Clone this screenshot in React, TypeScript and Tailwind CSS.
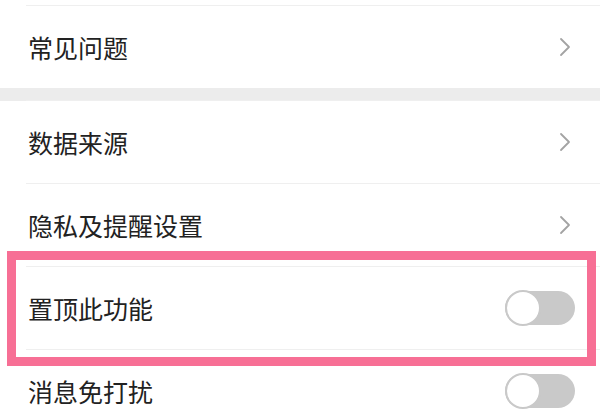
const Chevron = () => (
  <svg width="12" height="20" viewBox="0 0 12 20" className="mr-[4px]">
    <polyline points="2,2 10,10 2,18" fill="none" stroke="#a3a3a3" strokeWidth="1.8" strokeLinecap="round" strokeLinejoin="round" />
  </svg>
)

const Toggle = () => (
  <div className="w-[70px] h-[34px] rounded-full bg-[#c9c9c9] flex items-center">
    <div className="w-[36px] h-[36px] rounded-full bg-white border-2 border-[#c9c9c9]" />
  </div>
)

const Row = ({ label, right }: { label: string; right: 'chevron' | 'toggle' }) => (
  <div className="h-[83px] pl-[26px] flex flex-col">
    <div className="h-px bg-[#efefef]" />
    <div className="flex-1 flex items-center justify-between pl-[2px] pr-[25px]">
      <span className="text-[25px] text-[#222222] leading-none">{label}</span>
      {right === 'chevron' ? <Chevron /> : <Toggle />}
    </div>
  </div>
)

export default function App() {
  return (
    <div
      className="relative w-[600px] h-[409px] overflow-hidden bg-white pt-[5px]"
      style={{ fontFamily: '"Noto Sans CJK SC", "Noto Sans", sans-serif' }}
    >
      <Row label="常见问题" right="chevron" />
      <div className="h-[13px] bg-[#ececec]" />
      <div className="-mt-px">
        <Row label="数据来源" right="chevron" />
      </div>
      <Row label="隐私及提醒设置" right="chevron" />
      <Row label="置顶此功能" right="toggle" />
      <Row label="消息免打扰" right="toggle" />

      <div className="absolute left-[7px] top-[251px] w-[589px] h-[115px] border-[9px] border-[#f76f95] pointer-events-none" />
    </div>
  )
}
